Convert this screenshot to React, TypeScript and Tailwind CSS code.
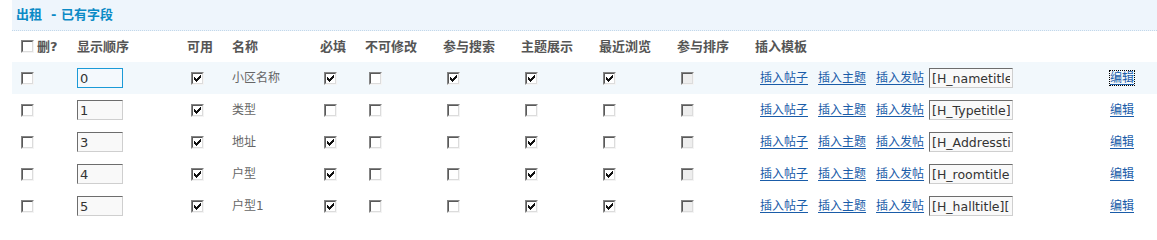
import React from "react";

type Row = {
  order: number;
  name: string;
  req: boolean;
  search: boolean;
  theme: boolean;
  recent: boolean;
  tpl: string;
};

const rows: Row[] = [
  { order: 0, name: "小区名称", req: true, search: true, theme: true, recent: true, tpl: "[H_nametitle]" },
  { order: 1, name: "类型", req: false, search: false, theme: false, recent: false, tpl: "[H_Typetitle]" },
  { order: 3, name: "地址", req: true, search: false, theme: true, recent: false, tpl: "[H_Addresstitle]" },
  { order: 4, name: "户型", req: true, search: false, theme: true, recent: true, tpl: "[H_roomtitle]" },
  { order: 5, name: "户型1", req: true, search: false, theme: true, recent: true, tpl: "[H_halltitle][H_hall]" },
];

// classic 7x7 pixel tick
const tick = ["......#", ".....##", "#...###", "##.###.", "#####..", ".###...", "..#...."];

function Box({ checked = false, disabled = false }: { checked?: boolean; disabled?: boolean }) {
  return (
    <span className="inline-flex w-[13px] h-[13px] border border-t-[#858585] border-l-[#858585] border-r-[#f4f4f4] border-b-[#f4f4f4]">
      <span
        className={`flex-1 flex items-center justify-center border border-t-[#5a5a5a] border-l-[#5a5a5a] border-r-[#dcdcdc] border-b-[#dcdcdc] ${
          disabled ? "bg-[#eeeeee]" : "bg-white"
        }`}
      >
        {checked && (
          <svg width="7" height="7" viewBox="0 0 7 7" shapeRendering="crispEdges">
            {tick.flatMap((line, y) =>
              line.split("").map((c, x) => (c === "#" ? <rect key={`${x}-${y}`} x={x} y={y} width="1" height="1" fill="#111" /> : null))
            )}
          </svg>
        )}
      </span>
    </span>
  );
}

const grid = "grid grid-cols-[65px_110px_45px_88px_45px_78px_78px_78px_78px_78px_355px_1fr] items-center";

export default function App() {
  return (
    <div className="pl-[12px] bg-white font-['DejaVu_Sans','Noto_Sans_CJK_SC',sans-serif] text-[12px] text-[#666]">
      {/* Title bar */}
      <div className="h-[31px] bg-[#eef5fc] border-b border-dotted border-[#c3d8ea] flex items-center pl-[4px] text-[13px] font-bold text-[#0b8ac6]">
        出租{"\u00a0"} - 已有字段
      </div>

      {/* Header */}
      <div className={`${grid} h-[31px] text-[13px] font-bold text-[#555]`}>
        <div className="pl-[9px] flex items-center gap-[3px]">
          <Box />
          <span>删?</span>
        </div>
        <div>显示顺序</div>
        <div>可用</div>
        <div>名称</div>
        <div>必填</div>
        <div>不可修改</div>
        <div>参与搜索</div>
        <div>主题展示</div>
        <div>最近浏览</div>
        <div>参与排序</div>
        <div>插入模板</div>
        <div />
      </div>

      {/* Rows */}
      {rows.map((r, i) => (
        <div key={r.order} className={`${grid} h-[32px] ${i === 0 ? "bg-[#f2f8fc]" : ""}`}>
          <div className="pl-[9px] flex">
            <Box />
          </div>
          <div>
            <input
              readOnly
              value={r.order}
              className={`w-[46px] h-[20px] px-[2px] text-[13px] text-[#333] outline-none border ${
                i === 0
                  ? "border-[#1b9ad7] bg-[#f4f9fd]"
                  : "border-t-[#6d6d6d] border-l-[#6d6d6d] border-r-[#cfcfcf] border-b-[#cfcfcf] bg-[#f9f9f9]"
              }`}
            />
          </div>
          <div className="pl-[4px] flex">
            <Box checked />
          </div>
          <div>{r.name}</div>
          <div className="pl-[4px] flex">
            <Box checked={r.req} />
          </div>
          <div className="pl-[4px] flex">
            <Box />
          </div>
          <div className="pl-[4px] flex">
            <Box checked={r.search} />
          </div>
          <div className="pl-[4px] flex">
            <Box checked={r.theme} />
          </div>
          <div className="pl-[4px] flex">
            <Box checked={r.recent} />
          </div>
          <div className="pl-[4px] flex">
            <Box disabled />
          </div>
          <div className="pl-[5px] flex items-center">
            <a href="#" className="text-[#1a5ca8] underline underline-offset-2">插入帖子</a>
            <a href="#" className="ml-[10px] text-[#1a5ca8] underline underline-offset-2">插入主题</a>
            <a href="#" className="ml-[10px] text-[#1a5ca8] underline underline-offset-2">插入发帖</a>
            <input
              readOnly
              value={r.tpl}
              className="ml-[5px] w-[84px] h-[20px] px-[2px] text-[12.5px] text-[#333] outline-none border border-t-[#6d6d6d] border-l-[#6d6d6d] border-r-[#cfcfcf] border-b-[#cfcfcf] bg-[#f9f9f9]"
            />
          </div>
          <div>
            <a
              href="#"
              className={`text-[#1a5ca8] underline underline-offset-2 ${i === 0 ? "outline outline-1 outline-dotted outline-black" : ""}`}
            >
              编辑
            </a>
          </div>
        </div>
      ))}
    </div>
  );
}
